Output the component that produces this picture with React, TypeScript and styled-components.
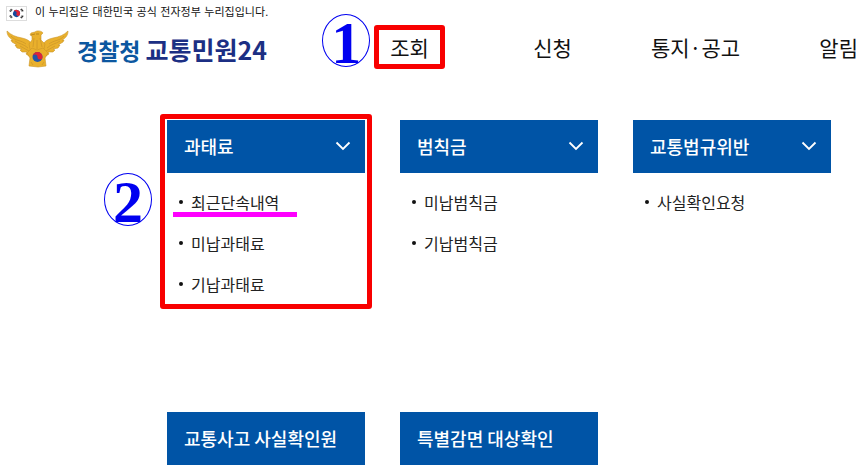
import React from "react";
import styled, { createGlobalStyle, css } from "styled-components";

const GlobalStyle = createGlobalStyle`
  * { box-sizing: border-box; }
  body {
    margin: 0;
    background: #fff;
    color: #111;
    font-family: "Noto Sans CJK KR", "Noto Sans", sans-serif;
    overflow-x: hidden;
  }
`;

const Page = styled.div`
  padding-bottom: 4px;
`;

const GovNotice = styled.div`
  display: flex;
  align-items: center;
  gap: 8px;
  height: 26px;
  padding-left: 6px;
  font-family: "DejaVu Sans", "Noto Sans CJK KR", sans-serif;
  font-size: 11px;
  line-height: 18px;
`;

const Header = styled.header`
  display: flex;
  align-items: flex-start;
  height: 94px;
  padding-right: 2px;
`;

const Brand = styled.a`
  display: flex;
  align-items: center;
  flex: 0 0 338px;
  height: 46px;
  padding-left: 6px;
  gap: 7px;
  text-decoration: none;
  white-space: nowrap;
`;

const BrandText = styled.span`
  display: flex;
  align-items: baseline;
  gap: 5px;
  font-weight: 700;
  line-height: 32px;
`;

const Agency = styled.span`
  font-size: 23px;
  color: #0c57a0;
`;

const Service = styled.span`
  font-size: 25px;
  color: #1c2f84;
`;

const Nav = styled.nav`
  display: grid;
  grid-template-columns: 11fr 11fr 11fr 7fr;
  flex: 1;
  height: 42px;
  align-items: center;
  justify-items: center;
`;

const NavItem = styled.div`
  position: relative;
  &:last-child { justify-self: end; }
`;

const NavButton = styled.button`
  display: block;
  padding: 0;
  border: 0;
  background: none;
  color: #111;
  font: inherit;
  font-size: 21px;
  line-height: 32px;
  white-space: nowrap;
`;

const Menus = styled.main`
  display: grid;
  grid-template-columns: repeat(3, 1fr);
  grid-template-rows: minmax(292px, auto) auto;
  column-gap: 35px;
  padding: 0 29px 0 167px;
`;

const Card = styled.section`
  position: relative;
  align-self: start;
`;

const CardButton = styled.button`
  display: flex;
  align-items: center;
  justify-content: space-between;
  width: 100%;
  height: 53px;
  padding: 0 14px 2px 17px;
  border: 0;
  background: #0054a6;
  color: #fff;
  font: inherit;
  font-size: 18px;
  font-weight: 500;
  line-height: 26px;
  white-space: nowrap;
`;

const LinkList = styled.ul`
  margin: 0;
  padding: 8px 0 0 12px;
  list-style: none;
`;

const LinkRow = styled.li`
  position: relative;
  display: flex;
  align-items: center;
  gap: 8px;
  height: 41px;

  &::before {
    content: "";
    width: 4px;
    height: 4px;
    border-radius: 50%;
    background: #111;
  }
`;

const MenuLink = styled.a`
  color: #222;
  font-size: 16px;
  line-height: 24px;
  text-decoration: none;
`;

const Frame = styled.span<{ $target: "nav" | "card" }>`
  position: absolute;
  border: 5px solid #f80000;
  border-radius: 3px;
  pointer-events: none;
  ${({ $target }) =>
    $target === "nav"
      ? css`inset: -6px -16px;`
      : css`inset: -6px -7px -5px;`}
`;

const Step = styled.span<{ $target: "nav" | "card" }>`
  position: absolute;
  display: flex;
  align-items: center;
  justify-content: center;
  width: 48px;
  height: 53px;
  padding-top: 4px;
  border: 1px solid #0000f0;
  border-radius: 50%;
  color: #0000f0;
  font-family: "Liberation Serif", serif;
  font-size: 60px;
  font-weight: 700;
  line-height: 52px;
  ${({ $target }) =>
    $target === "nav"
      ? css`right: calc(100% + 20px); top: -17px;`
      : css`right: calc(100% + 15px); top: 53px;`}
`;

const Marker = styled.span`
  position: absolute;
  left: -6px;
  bottom: 5px;
  width: 124px;
  height: 5px;
  background: #f0f;
`;

function Flag() {
  return (
    <svg width="21" height="15" viewBox="0 0 21 15" aria-hidden="true">
      <rect x=".5" y=".5" width="20" height="14" fill="#fff" stroke="#ddd" />
      <g transform="rotate(25 10.5 7.5)">
        <circle cx="10.5" cy="7.5" r="3.5" fill="#174a9c" />
        <path d="M7 7.5a3.5 3.5 0 0 1 7 0a1.75 1.75 0 0 1-3.5 0a1.75 1.75 0 0 0-3.5 0" fill="#df2438" />
      </g>
      <g stroke="#333" strokeWidth="2" strokeDasharray="1.2 .3">
        <path d="M4 5.5 6 3M15 3l2 2.5M4 9.5 6 12M15 12l2-2.5" />
      </g>
    </svg>
  );
}

function Emblem() {
  return (
    <svg width="64" height="40" viewBox="0 0 64 40" aria-hidden="true">
      <g fill="#e9b02c" stroke="#cb9528" strokeWidth=".6" strokeLinejoin="round">
        <path d="M1 2C5 6 10 8 16 9c5 1 8 3 10 6l2 13-5-1-3-2 1-2-5 0-2-2 2-1-5-1-2-3 2 0-5-3-1-2 2 0C3 9 1 6 1 2Z" />
        <path d="M62 2c-4 4-9 6-15 7-5 1-8 3-10 6l-2 13 5-1 3-2-1-2 5 0 2-2-2-1 5-1 2-3-2 0 5-3 1-2-2 0c4-2 6-5 6-9Z" />
        <path d="M26 11V7l-2-1 1-2 4-1c2-2 7-1 8 1l-2 2v5l4 4-2 10H25l-2-10Z" />
        <path d="m21 24 5-5 5 2 6-2 5 5-3 5 1 8-8 1-9-1 1-8Z" />
      </g>
      <path d="M5 7c4 5 10 4 15 8M9 12c4 3 9 3 13 7M14 17l9 5M58 7c-4 5-10 4-15 8M54 12c-4 3-9 3-13 7M49 17l-9 5M28 9l-1 9M34 9l2 9M31 11v9M25 33l2 3M38 33l-2 3" fill="none" stroke="#ce9829" strokeWidth=".8" />
      <path d="M25 6l4-1M30 5h3" fill="none" stroke="#a87518" strokeWidth=".7" />
      <circle cx="31.5" cy="28" r="5" fill="#2356a8" />
      <path d="M26.5 28a5 5 0 0 1 10 0a2.5 2.5 0 0 1-5 0a2.5 2.5 0 0 0-5 0" fill="#df2438" />
    </svg>
  );
}

function Chevron() {
  return (
    <svg width="16" height="10" viewBox="0 0 16 10" aria-hidden="true">
      <path d="m1.5 1.5 6.5 6.5 6.5-6.5" fill="none" stroke="#fff" strokeWidth="1.8" />
    </svg>
  );
}

const navItems = ["조회", "신청", "통지·공고", "알림"];

const menus = [
  { title: "과태료", links: ["최근단속내역", "미납과태료", "기납과태료"] },
  { title: "범칙금", links: ["미납범칙금", "기납범칙금"] },
  { title: "교통법규위반", links: ["사실확인요청"] },
  { title: "교통사고 사실확인원", links: [] },
  { title: "특별감면 대상확인", links: [] },
];

export default function App() {
  return (
    <>
      <GlobalStyle />
      <Page>
        <GovNotice>
          <Flag />
          <span>이 누리집은 대한민국 공식 전자정부 누리집입니다.</span>
        </GovNotice>
        <Header>
          <Brand href="#">
            <Emblem />
            <BrandText>
              <Agency>경찰청</Agency>
              <Service>교통민원24</Service>
            </BrandText>
          </Brand>
          <Nav>
            {navItems.map((label, i) => (
              <NavItem key={label}>
                <NavButton type="button">{label}</NavButton>
                {i === 0 && (
                  <>
                    <Frame $target="nav" />
                    <Step $target="nav">1</Step>
                  </>
                )}
              </NavItem>
            ))}
          </Nav>
        </Header>
        <Menus>
          {menus.map(({ title, links }, i) => (
            <Card key={title}>
              <CardButton type="button">
                {title}
                {links.length > 0 && <Chevron />}
              </CardButton>
              {links.length > 0 && (
                <LinkList>
                  {links.map((label, row) => (
                    <LinkRow key={label}>
                      <MenuLink href="#">{label}</MenuLink>
                      {i === 0 && row === 0 && <Marker />}
                    </LinkRow>
                  ))}
                </LinkList>
              )}
              {i === 0 && (
                <>
                  <Frame $target="card" />
                  <Step $target="card">2</Step>
                </>
              )}
            </Card>
          ))}
        </Menus>
      </Page>
    </>
  );
}
